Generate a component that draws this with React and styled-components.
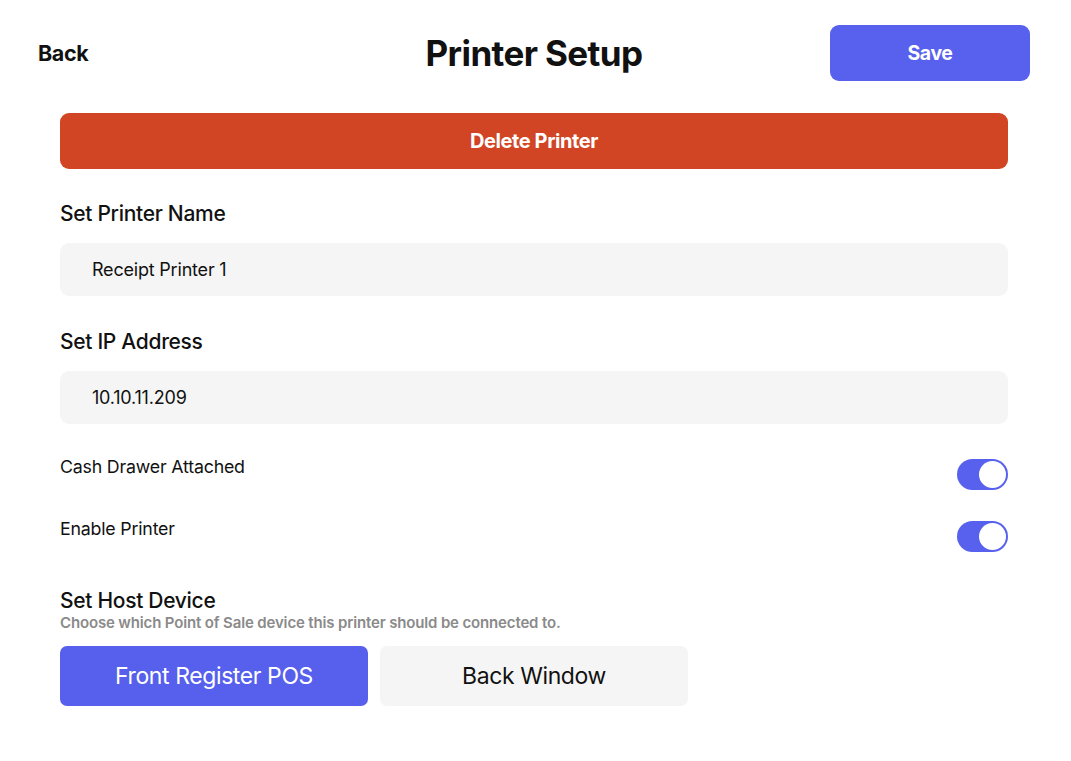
import React from "react";
import styled, { createGlobalStyle } from "styled-components";

const Global = createGlobalStyle`
  * { box-sizing: border-box; }
  html, body { margin: 0; padding: 0; background: #ffffff; }
  body { font-family: Inter, "Noto Sans", "Liberation Sans", sans-serif; color: #111; }
`;

const Page = styled.div`
  width: 1071px;
  height: 761px;
  background: #fff;
  display: flex;
  flex-direction: column;
`;

const Header = styled.header`
  display: grid;
  grid-template-columns: 1fr auto 1fr;
  align-items: center;
  padding: 25px 41px 0 38px;
  height: 81px;
`;

const BackLink = styled.button`
  justify-self: start;
  background: none;
  border: none;
  padding: 0;
  font-family: inherit;
  font-size: 21.5px;
  font-weight: 700;
  letter-spacing: -0.4px;
  color: #111;
`;

const Title = styled.h1`
  margin: 0;
  font-size: 35px;
  font-weight: 700;
  letter-spacing: -0.6px;
  color: #111;
`;

const PrimaryButton = styled.button`
  justify-self: end;
  width: 200px;
  height: 56px;
  border: none;
  border-radius: 9px;
  background: #5761ee;
  color: #fff;
  font-family: inherit;
  font-size: 19.5px;
  font-weight: 700;
  letter-spacing: -0.4px;
`;

const Content = styled.main`
  display: flex;
  flex-direction: column;
  padding: 32px 63px 0 60px;
`;

const DangerButton = styled.button`
  width: 100%;
  height: 56px;
  border: none;
  border-radius: 9px;
  background: #d14524;
  color: #fff;
  font-family: inherit;
  font-size: 20px;
  font-weight: 700;
  letter-spacing: -0.4px;
`;

const Section = styled.section`
  display: flex;
  flex-direction: column;
  margin-top: ${(p) => p.$top}px;
`;

const Label = styled.div`
  font-size: 21px;
  font-weight: 500;
  letter-spacing: -0.3px;
  line-height: 24px;
  color: #111;
`;

const Field = styled.div`
  margin-top: 17px;
  height: 53px;
  border-radius: 9px;
  background: #f5f5f5;
  display: flex;
  align-items: center;
  padding-left: 32px;
  font-size: 18px;
  letter-spacing: -0.2px;
  color: #111;
`;

const ToggleRow = styled.div`
  display: flex;
  justify-content: space-between;
  align-items: flex-start;
  margin-top: ${(p) => p.$top}px;
`;

const ToggleLabel = styled.span`
  font-size: 17.8px;
  letter-spacing: -0.2px;
  line-height: 20px;
  color: #111;
  margin-top: 1px;
`;

const Track = styled.div`
  width: 51px;
  height: 31px;
  border-radius: 16px;
  background: #5761ee;
  padding: 2px;
  display: flex;
  justify-content: flex-end;
  margin-top: 3px;
`;

const Knob = styled.div`
  width: 27px;
  height: 27px;
  border-radius: 50%;
  background: #fff;
`;

const Toggle = () => (
  <Track>
    <Knob />
  </Track>
);

const Hint = styled.div`
  font-size: 15px;
  font-weight: 600;
  color: #8a8a8a;
  letter-spacing: -0.15px;
  line-height: 20px;
`;

const Choices = styled.div`
  display: flex;
  gap: 12px;
  margin-top: 13px;
`;

const Choice = styled.button`
  width: 308px;
  height: 60px;
  border: none;
  border-radius: 7px;
  background: ${(p) => (p.$active ? "#5660ec" : "#f5f5f5")};
  color: ${(p) => (p.$active ? "#fff" : "#111")};
  font-family: inherit;
  font-size: 23px;
  font-weight: 400;
  letter-spacing: -0.4px;
`;

export default function App() {
  return (
    <>
      <Global />
      <Page>
        <Header>
          <BackLink>Back</BackLink>
          <Title>Printer Setup</Title>
          <PrimaryButton>Save</PrimaryButton>
        </Header>
        <Content>
          <DangerButton>Delete Printer</DangerButton>
          <Section $top={33}>
            <Label>Set Printer Name</Label>
            <Field>Receipt Printer 1</Field>
          </Section>
          <Section $top={34}>
            <Label>Set IP Address</Label>
            <Field>10.10.11.209</Field>
          </Section>
          <ToggleRow $top={32}>
            <ToggleLabel>Cash Drawer Attached</ToggleLabel>
            <Toggle />
          </ToggleRow>
          <ToggleRow $top={28}>
            <ToggleLabel>Enable Printer</ToggleLabel>
            <Toggle />
          </ToggleRow>
          <Section $top={37}>
            <Label>Set Host Device</Label>
            <Hint>Choose which Point of Sale device this printer should be connected to.</Hint>
            <Choices>
              <Choice $active>Front Register POS</Choice>
              <Choice>Back Window</Choice>
            </Choices>
          </Section>
        </Content>
      </Page>
    </>
  );
}
